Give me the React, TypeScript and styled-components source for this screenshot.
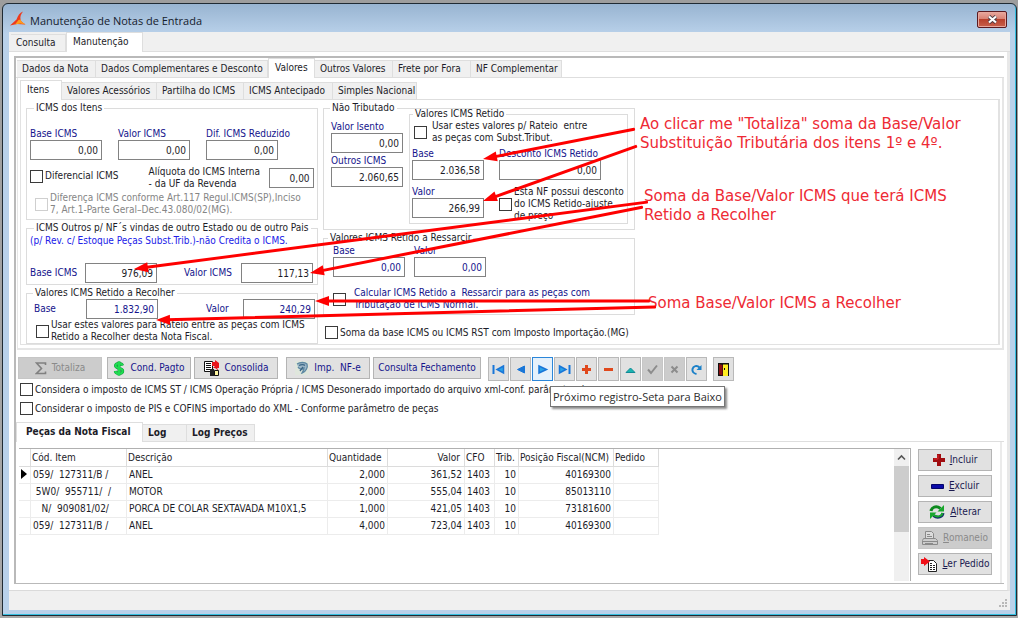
import React from 'react';
import styled, { createGlobalStyle, css } from 'styled-components';

const UI = '"DejaVu Sans Condensed", "DejaVu Sans", sans-serif';
const CAPTION = '"Open Sans", "Noto Sans", sans-serif';
const NAVY = '#14148c';
const INK = '#1c1c28';

const GlobalStyle = createGlobalStyle`
  *, *::before, *::after { box-sizing: border-box; }
  html, body { margin: 0; }
  body { background: #9d9d9d; font: 10px/12px ${UI}; color: ${INK}; }
  button, input { font: inherit; color: inherit; margin: 0; }
`;

/* ---------- window frame ---------- */

const Desktop = styled.div`
  min-height: 100vh;
  padding: 3px 1px 3px 2px;
  display: flex;
  flex-direction: column;
  background: linear-gradient(#9d9d9d, #a8a8a8);
`;

const Window = styled.section`
  flex: 1;
  display: flex;
  flex-direction: column;
  padding: 0 6px 5px;
  border: 1px solid #1f2a33;
  border-radius: 6px 6px 0 0;
  background: linear-gradient(#98b4d1 0, #b9d1ea 30px);
  box-shadow: inset -1px -1px 0 #35bfe0;
`;

const TitleBar = styled.header`
  height: 28px;
  display: flex;
  align-items: center;
  gap: 4px;
  padding: 2px 3px 0 1px;
  font: 11px/16px ${CAPTION};
  color: #15202c;
`;

const Title = styled.h1`
  flex: 1;
  margin: 0;
  padding-top: 4px;
  font: inherit;
`;

const CloseButton = styled.button`
  width: 30px;
  height: 17px;
  padding: 0;
  display: grid;
  place-items: center;
  border: 1px solid #5b1a20;
  border-radius: 2px;
  background: linear-gradient(#e9a99f 0, #d98274 45%, #b8402c 50%, #c8614c 100%);
  box-shadow: inset 0 0 0 1px #e7a79d;
`;

const Client = styled.div`
  flex: 1;
  display: flex;
  flex-direction: column;
  background: #fff;
`;

/* ---------- tabs and pages ---------- */

const TabBar = styled.div<{ $inset?: number; $fill?: string }>`
  height: 20px;
  display: flex;
  align-items: flex-end;
  padding-left: ${p => p.$inset ?? 0}px;
  background: ${p => p.$fill ?? '#fff'};
  border-bottom: 1px solid #dedede;
`;

const Tab = styled.button<{ $active?: boolean; $w: number; $bold?: boolean }>`
  width: ${p => p.$w}px;
  height: 17px;
  padding: 0 0 0 5px;
  border: 1px solid #dedede;
  border-left-width: 0;
  border-bottom: 0;
  background: #f0f0f0;
  text-align: left;
  white-space: nowrap;
  font-weight: ${p => (p.$bold ? 700 : 400)};
  ${p => p.$active && css`
    height: 20px;
    margin-bottom: -1px;
    padding: 0 0 2px ${p.$bold ? 9 : 6}px;
    border-left-width: 1px;
    background: #fff;
  `}
`;

const Outer = styled.div`
  flex: 1;
  display: flex;
  flex-direction: column;
  padding: 4px 3px 6px 5px;
  border-right: 3px solid #e8e8e8;
  border-bottom: 1px solid #dadada;
`;

const Sunken = styled.div`
  flex: 1;
  display: flex;
  flex-direction: column;
  border: solid #b9b9b9;
  border-width: 2px 0 1px 2px;
`;

const Page = styled.div`
  margin-left: 1px;
  padding: 2px 2px 3px;
  border: solid #e6e6e6;
  border-width: 0 2px 2px 1px;
`;

const ItemsPage = styled.div`
  position: relative;
  display: flex;
  gap: 5px;
  padding: 2px 4px 0 5px;
  border: solid #e2e2e2;
  border-width: 0 2px 1px 1px;
`;

/* ---------- form pieces ---------- */

const Column = styled.div<{ $w: number; $gap: number }>`
  width: ${p => p.$w}px;
  flex: none;
  display: flex;
  flex-direction: column;
  gap: ${p => p.$gap}px;
`;

const Group = styled.fieldset<{ $pad: string; $legend?: number; $raised?: boolean }>`
  min-width: 0;
  margin: ${p => (p.$raised ? -6 : 0)}px 0 0;
  padding: ${p => p.$pad};
  border: 1px solid #dcdcdc;
  > legend {
    margin-left: ${p => p.$legend ?? 4}px;
    padding: 0 2px;
    height: 12px;
    white-space: nowrap;
  }
`;

const Row = styled.div<{ $gap?: number; $top?: number; $left?: number }>`
  display: flex;
  align-items: flex-start;
  gap: ${p => p.$gap ?? 0}px;
  margin-top: ${p => p.$top ?? 0}px;
  padding-left: ${p => p.$left ?? 0}px;
`;

const StackedField = styled.label<{ $w?: number }>`
  display: flex;
  flex-direction: column;
  width: ${p => p.$w ?? 72}px;
  color: ${NAVY};
  line-height: 12px;
  white-space: nowrap;
`;

const InlineField = styled.label<{ $label: number; $plain?: boolean }>`
  display: grid;
  grid-template-columns: ${p => p.$label}px auto;
  align-items: center;
  color: ${p => (p.$plain ? INK : NAVY)};
`;

const NumberInput = styled.input<{ $w?: number; $navy?: boolean }>`
  width: ${p => p.$w ?? 72}px;
  height: 20px;
  padding: 0 3px;
  border: 1px solid #828282;
  border-radius: 0;
  background: #fff;
  color: ${p => (p.$navy ? NAVY : INK)};
  text-align: right;
`;

const Tick = styled.label<{ $h?: number; $gap?: number; $color?: string }>`
  display: flex;
  align-items: center;
  gap: ${p => p.$gap ?? 2}px;
  min-height: ${p => p.$h ?? 13}px;
  color: ${p => p.$color ?? INK};
  white-space: pre;
  input {
    appearance: none;
    flex: none;
    width: 13px;
    height: 13px;
    border: 1px solid #3a3a3a;
    background: #fff;
  }
  input:disabled { border-color: #cfcfcf; }
`;

const Hint = styled.p`
  margin: 0;
  color: #2020e8;
  white-space: nowrap;
`;

/* ---------- annotations ---------- */

const Notes = styled.div`
  display: flex;
  flex-direction: column;
  padding-top: 13px;
  color: #ee2a34;
  font: 15px/19px "DejaVu Sans", sans-serif;
`;

const Note = styled.p<{ $top?: number; $left?: number }>`
  margin: ${p => p.$top ?? 0}px 0 0 ${p => p.$left ?? 0}px;
  white-space: pre;
`;

const ArrowLayer = styled.svg`
  position: absolute;
  inset: 0;
  width: 100%;
  height: 100%;
  overflow: visible;
  pointer-events: none;
`;

/* ---------- toolbar ---------- */

const Toolbar = styled.div`
  display: flex;
  align-items: flex-start;
  margin: 7px 0 0 2px;
`;

const ButtonSet = styled.div<{ $gap: number; $left?: number }>`
  display: flex;
  gap: ${p => p.$gap}px;
  margin-left: ${p => p.$left ?? 0}px;
`;

const Button = styled.button<{ $w: number }>`
  width: ${p => p.$w}px;
  height: 22px;
  padding: 0;
  display: flex;
  align-items: center;
  justify-content: center;
  gap: 5px;
  border: 1px solid #b4b4b4;
  background: #e1e1e1;
  color: ${NAVY};
  white-space: pre;
  &:disabled {
    border-color: #c6c6c6;
    background: #cccccc;
    color: #8a8a8a;
  }
`;

const ActionButton = styled(Button)`
  color: #1a1a50;
`;

const NavButton = styled.button<{ $hot?: boolean }>`
  position: relative;
  width: 21px;
  height: 24px;
  padding: 0;
  display: grid;
  place-items: center;
  border: 1px solid ${p => (p.$hot ? '#2b86d9' : '#b9b9b9')};
  background: ${p => (p.$hot ? '#e5f1fb' : '#e1e1e1')};
  &:disabled { background: #cccccc; border-color: #c6c6c6; }
`;

const Tooltip = styled.span`
  position: absolute;
  z-index: 2;
  top: 28px;
  left: 17px;
  padding: 1px 2px;
  border: 1px solid #767676;
  background: #fff;
  box-shadow: 2px 2px 2px rgba(0, 0, 0, 0.45);
  font: 11px/17px ${CAPTION};
  color: #2c2c2c;
  white-space: nowrap;
`;

const Options = styled.div`
  display: flex;
  flex-direction: column;
  gap: 6px;
  padding: 2px 0 7px 4px;
`;

/* ---------- grid ---------- */

const Parts = styled.div`
  flex: 1;
  display: flex;
  gap: 7px;
  margin-right: 2px;
  padding: 6px 8px 2px 3px;
  border-right: 2px solid #ebebeb;
`;

const GridFrame = styled.div`
  flex: 1;
  min-height: 133px;
  display: flex;
  justify-content: space-between;
  border: solid #b0b0b0;
  border-width: 1px 1px 0 0;
`;

const Grid = styled.table`
  table-layout: fixed;
  width: 640px;
  height: 86px;
  border-collapse: separate;
  border-spacing: 0;
  th, td {
    height: 17px;
    padding: 0 2px;
    border: solid #ececec;
    border-width: 0 1px 1px 0;
    font-weight: 400;
    text-align: left;
    white-space: pre;
    line-height: 12px;
  }
  th { height: 18px; padding: 0 1px; border-color: #dcdcdc; }
`;

const Cell = styled.td<{ $right?: boolean }>`
  && { text-align: ${p => (p.$right ? 'right' : 'left')}; }
`;

const Head = styled.th<{ $right?: boolean }>`
  && { text-align: ${p => (p.$right ? 'right' : 'left')}; }
  && { padding-right: ${p => (p.$right ? 4 : 0)}px; }
`;

const ScrollTrack = styled.div`
  width: 15px;
  margin-right: 1px;
  display: flex;
  flex-direction: column;
  align-items: stretch;
  background: #f0f0f0;
  svg { height: 17px; width: 15px; }
`;

const Thumb = styled.div`
  height: 66px;
  background: #cdcdcd;
`;

const Actions = styled.div`
  display: flex;
  flex-direction: column;
  gap: 4px;
  padding-top: 1px;
`;

const StatusBar = styled.footer`
  height: 19px;
  display: flex;
  align-items: flex-end;
  justify-content: flex-end;
  padding: 2px;
  background: #f0f0f0;
`;

/* ---------- icons ---------- */

const AppIcon = () => (
  <svg width="16" height="16" viewBox="0 0 16 16">
    <path d="M13 0.500C9.500 2 8 4.500 6.500 8.500L0 14.500 7 13l8.500.5C13 12 11 10.500 10.500 8.500 10 5.500 11 3 13 .5z" fill="#ee3a1c" />
    <path d="M8.500 9l2-.5c.5 2 2.500 3.500 5 5L10.500 12.500 5 13.500z" fill="#ff9d1c" />
  </svg>
);

const Sigma = () => (
  <svg width="12" height="13" viewBox="0 0 12 13">
    <path d="M10.500 3V1H1.500l5 5.500-5 5h9V9.500" fill="none" stroke="#808080" strokeWidth="1.600" />
  </svg>
);

const DOLLAR = 'M9.500 4.500C9 2.800 7.500 2.500 6 2.500c-2 0-3.500.8-3.500 2.300C2.500 8 9.700 6.500 9.700 10c0 1.600-1.700 2.500-3.700 2.500-1.800 0-3.400-.6-3.700-2.500M6 .5v14';
const Dollar = () => (
  <svg width="12" height="15" viewBox="0 0 12 15" fill="none">
    <path d={DOLLAR} stroke="#10983a" strokeWidth="3" />
    <path d={DOLLAR} stroke="#1fdc50" strokeWidth="2" />
  </svg>
);

const Merge = () => (
  <svg width="16" height="16" viewBox="0 0 16 16">
    <path d="M.5 1.500h8v10h-8z" fill="#fff" stroke="#111" />
    <path d="M2 3.500h5M2 5.500h5M2 7.500h5M2 9.500h5" stroke="#111" />
    <path d="M8 2h3V0l4 3v5h-2l2 3-4-3H9l2-2H8z" fill="#e8141c" />
    <path d="M6 9h4l1 7H6z" fill="#222" />
    <path d="M10.500 10.500h4v5h-4z" fill="#fff6a0" stroke="#111" />
  </svg>
);

const Import = () => (
  <svg width="14" height="14" viewBox="0 0 14 14">
    <path d="M0 0h14v14H0z" fill="#dfe6dc" />
    <path d="M2 3c3-2 8-2 10 0 1 3-1 8-5 9 1-2 2-3 2-5-2 2-5 1-6-1" fill="#9db8c8" stroke="#5d88a2" strokeWidth="1.300" />
    <path d="M4 4.500c2-1 5-1 6 0M5 10l3-4" stroke="#3a6685" strokeWidth="1.300" fill="none" />
  </svg>
);

const BLUE = '#1976d8';
const navIcons: Record<string, React.ReactNode> = {
  first: (
    <>
      <path d="M1.500 2v9" stroke={BLUE} strokeWidth="2" />
      <path d="M11.500 3L5 6.500l6.500 3.500z" fill="#2aa3e8" stroke={BLUE} strokeWidth="1.500" />
    </>
  ),
  prev: <path d="M10.500 3L3.500 6.500l7 3.500z" fill={BLUE} stroke={BLUE} />,
  next: <path d="M3 3l7.500 3.500L3 10z" fill="#2aa3e8" stroke={BLUE} strokeWidth="1.500" />,
  last: (
    <>
      <path d="M11.500 2v9" stroke={BLUE} strokeWidth="2" />
      <path d="M1.500 3L8 6.500 1.500 10z" fill="#2aa3e8" stroke={BLUE} strokeWidth="1.500" />
    </>
  ),
  add: <path d="M6.500 2v9M2 6.500h9" stroke="#e0481c" strokeWidth="3" />,
  del: <path d="M2 6.500h9" stroke="#e0481c" strokeWidth="3" />,
  edit: <path d="M2 9.500l4.500-4.500 4.500 4.500z" fill="#1ab5b0" stroke="#118a96" />,
  post: <path d="M2 6.500l3 3.500 6-7.500" fill="none" stroke="#8c8c8c" strokeWidth="2" />,
  cancel: <path d="M3.500 3.500l6 6m0-6l-6 6" stroke="#8c8c8c" strokeWidth="2" />,
  refresh: (
    <>
      <path d="M6.500 11C3.500 10.500 2 8.500 2.500 6 3.200 3 7 1.800 9.500 4.500" fill="none" stroke="#1b80c8" strokeWidth="2" />
      <path d="M11.500 2v5h-5z" fill="#1b80c8" />
    </>
  ),
  exit: (
    <>
      <path d="M1 0h11v13H1z" fill="#111" />
      <path d="M6 1.500h5V13H6z" fill="#ffee22" />
      <path d="M2 1l3.500 1v10.500L2 11.500z" fill="#8c1010" />
      <path d="M7.500 5v2" stroke="#111" />
    </>
  ),
};

const NavIcon = ({ kind }: { kind: string }) => (
  <svg width="13" height="13" viewBox="0 0 13 13">{navIcons[kind]}</svg>
);

const PlusIcon = () => (
  <svg width="12" height="12" viewBox="0 0 12 12">
    <path d="M4 0h4v4h4v4H8v4H4V8H0V4h4z" fill="#a00c10" />
    <path d="M5 1v4H1" fill="none" stroke="#d8262c" />
  </svg>
);

const MinusIcon = () => (
  <svg width="13" height="12" viewBox="0 0 13 12">
    <path d="M.5 4.500h12v4H.5z" fill="#0a0aa8" stroke="#05056a" />
  </svg>
);

const SwapIcon = () => (
  <svg width="16" height="16" viewBox="0 0 16 16">
    <path d="M2 7C2.500 3.500 7 1 11.500 4.500" fill="none" stroke="#0d8a1e" strokeWidth="3" />
    <path d="M15 1v6.500H8.500z" fill="#18a82c" />
    <path d="M14 9c-.5 3.500-5 6-9.500 2.500" fill="none" stroke="#14306a" strokeWidth="3" />
    <path d="M13.500 9c-.5 3-5 5-9 2" fill="none" stroke="#18a82c" strokeWidth="1.800" />
    <path d="M1 15V8.500h6.500z" fill="#18a82c" />
  </svg>
);

const PrinterIcon = () => (
  <svg width="16" height="15" viewBox="0 0 16 15" fill="none" stroke="#8a8a8a">
    <path d="M3.500 7.500v-7h6l2 2v5" fill="#dcdcdc" />
    <path d="M5 3.500h3M5 5.500h5" />
    <path d="M1.500 7.500h12l2 2v4H.5v-4zM.5 10.500h15M3 12.500h8" />
  </svg>
);

const ReadIcon = () => (
  <svg width="17" height="15" viewBox="0 0 17 15">
    <path d="M7.500 3.500h5l3 3v8h-8z" fill="#fff" stroke="#222" />
    <path d="M9 8.500h5M9 10.500h5M9 12.500h5M9 6.500h3" stroke="#222" strokeDasharray="2 1" />
    <path d="M0 2h3V0l6 4.500L3 9V7H0z" fill="#f01018" />
  </svg>
);

/* ---------- data ---------- */

const rows = [
  ['059/  127311/B /', 'ANEL', '2,000', '361,52', '1403', '10', '40169300', ''],
  [' 5W0/  955711/  /', 'MOTOR', '2,000', '555,04', '1403', '10', '85013110', ''],
  ['   N/  909081/02/', 'PORCA DE COLAR SEXTAVADA M10X1,5', '1,000', '421,05', '1403', '10', '73181600', ''],
  ['059/  127311/B /', 'ANEL', '4,000', '723,04', '1403', '10', '40169300', ''],
];
const rightCols = [false, false, true, true, false, true, true, false];
const headings = ['Cód. Item', 'Descrição', 'Quantidade', 'Valor', 'CFO', 'Trib.', 'Posição Fiscal(NCM)', 'Pedido'];
const colWidths = [12, 96, 201, 60, 77, 30, 24, 95, 45];

type Span = [number, number, number, number];

const arrows: Span[] = [
  [614, 29, 462, 59],
  [616, 46, 462, 101],
  [627, 102, 113, 169],
  [622, 107, 289, 173],
  [629, 201, 294, 201],
  [635, 207, 135, 220],
];

const Arrow = ({ at: [x1, y1, x2, y2] }: { at: Span }) => {
  const length = Math.hypot(x2 - x1, y2 - y1);
  const angle = (Math.atan2(y2 - y1, x2 - x1) * 180) / Math.PI;
  return (
    <g transform={`translate(${x1} ${y1}) rotate(${angle})`} fill="#fe0000">
      <rect x={0} y={-1.5} width={length - 10} height={3} rx={1} />
      <path d={`M${length} 0L${length - 14} -5v10z`} />
    </g>
  );
};

interface CheckProps {
  children: React.ReactNode;
  disabled?: boolean;
  h?: number;
  gap?: number;
  color?: string;
}

const Check = ({ children, disabled, h, gap, color }: CheckProps) => (
  <Tick $h={h} $gap={gap} $color={color}>
    <input type="checkbox" disabled={disabled} />
    <span>{children}</span>
  </Tick>
);

interface StackedProps {
  label: string;
  value: string;
  navy?: boolean;
  w?: number;
}

const Stacked = ({ label, value, navy, w }: StackedProps) => (
  <StackedField $w={w}>
    {label}
    <NumberInput defaultValue={value} $navy={navy} $w={w} />
  </StackedField>
);

export default function App() {
  return (
    <Desktop>
      <GlobalStyle />
      <Window>
        <TitleBar>
          <AppIcon />
          <Title>Manutenção de Notas de Entrada</Title>
          <CloseButton aria-label="Fechar">
            <svg width="11" height="9" viewBox="0 0 11 9">
              <path d="M2 1.500l7 6m0-6l-7 6" stroke="#4b3a42" strokeWidth="3.800" />
              <path d="M2 1.500l7 6m0-6l-7 6" stroke="#fff" strokeWidth="2.200" />
            </svg>
          </CloseButton>
        </TitleBar>
        <Client>
          <TabBar $inset={2} $fill="#f0f0f0" role="tablist">
            <Tab $w={55} role="tab">Consulta</Tab>
            <Tab $w={77} $active role="tab">Manutenção</Tab>
          </TabBar>
          <Outer>
            <Sunken>
              <TabBar $inset={1} role="tablist">
                <Tab $w={79} role="tab">Dados da Nota</Tab>
                <Tab $w={172} role="tab">Dados Complementares e Desconto</Tab>
                <Tab $w={47} $active role="tab">Valores</Tab>
                <Tab $w={78} role="tab">Outros Valores</Tab>
                <Tab $w={78} role="tab">Frete por Fora</Tab>
                <Tab $w={91} role="tab">NF Complementar</Tab>
              </TabBar>
              <Page>
                <TabBar role="tablist">
                  <Tab $w={42} $active role="tab">Itens</Tab>
                  <Tab $w={95} role="tab">Valores Acessórios</Tab>
                  <Tab $w={87} role="tab">Partilha do ICMS</Tab>
                  <Tab $w={89} role="tab">ICMS Antecipado</Tab>
                  <Tab $w={84} role="tab">Simples Nacional</Tab>
                </TabBar>
                <ItemsPage>
                  <Column $w={292} $gap={2}>
                    <Group $pad="14px 4px 3px 3px">
                      <legend>ICMS dos Itens</legend>
                      <Row $gap={16}>
                        <Stacked label="Base ICMS" value="0,00" />
                        <Stacked label="Valor ICMS" value="0,00" />
                        <Stacked label="Dif. ICMS Reduzido" value="0,00" />
                      </Row>
                      <Row $top={6} $gap={30}>
                        <Check h={20}>Diferencial ICMS</Check>
                        <InlineField $label={120} $plain>
                          <span>Alíquota do ICMS Interna<br />- da UF da Revenda</span>
                          <NumberInput $w={45} defaultValue="0,00" />
                        </InlineField>
                      </Row>
                      <Row $top={2} $left={5}>
                        <Check disabled color="#858585">
                          {'Diferença ICMS conforme Art.117 Regul.ICMS(SP),Inciso\n7, Art.1-Parte Geral–Dec.43.080/02(MG).'}
                        </Check>
                      </Row>
                    </Group>
                    <Group $pad="1px 5px 1px 3px">
                      <legend>ICMS Outros p/ NF´s vindas de outro Estado ou de outro Pais</legend>
                      <Hint>(p/ Rev. c/ Estoque Peças Subst.Trib.)-não Credita o ICMS.</Hint>
                      <Row $gap={27} $top={16}>
                        <InlineField $label={55}>
                          Base ICMS
                          <NumberInput defaultValue="976,09" />
                        </InlineField>
                        <InlineField $label={57}>
                          Valor ICMS
                          <NumberInput defaultValue="117,13" />
                        </InlineField>
                      </Row>
                    </Group>
                    <Group $pad="0 4px 0 7px" $legend={-1}>
                      <legend>Valores ICMS Retido a Recolher</legend>
                      <Row $gap={48}>
                        <InlineField $label={52}>
                          Base
                          <NumberInput $navy defaultValue="1.832,90" />
                        </InlineField>
                        <InlineField $label={37}>
                          Valor
                          <NumberInput $navy defaultValue="240,29" />
                        </InlineField>
                      </Row>
                      <Row $left={2}>
                        <Check>
                          {'Usar estes valores para Rateio entre as peças com ICMS\nRetido a Recolher desta Nota Fiscal.'}
                        </Check>
                      </Row>
                    </Group>
                  </Column>
                  <Column $w={312} $gap={2}>
                    <Group $pad="0 3px 5px 7px" $legend={-1}>
                      <legend>Não Tributado</legend>
                      <Row $gap={6}>
                        <Column $w={72} $gap={2}>
                          <Row $top={7}><Stacked label="Valor Isento" value="0,00" /></Row>
                          <Stacked label="Outros ICMS" value="2.060,65" />
                        </Column>
                        <Group $pad="0 3px 1px 2px" $legend={1} $raised>
                          <legend>Valores ICMS Retido</legend>
                          <Row $left={2}>
                            <Check gap={5}>{'Usar estes valores p/ Rateio  entre\nas peças com Subst.Tribut.'}</Check>
                          </Row>
                          <Row $gap={15} $top={4}>
                            <Stacked label="Base" value="2.036,58" />
                            <Stacked label="Desconto ICMS Retido" value="0,00" w={102} />
                          </Row>
                          <Row $gap={15} $top={6}>
                            <Stacked label="Valor" value="266,99" />
                            <Check>{'Esta NF possui desconto\ndo ICMS Retido-ajuste\nde preço'}</Check>
                          </Row>
                        </Group>
                      </Row>
                    </Group>
                    <Group $pad="1px 8px 3px 9px" $legend={-5}>
                      <legend>Valores ICMS Retido a Ressarcir</legend>
                      <Row $gap={9}>
                        <Stacked label="Base" value="0,00" navy />
                        <Stacked label="Valor" value="0,00" navy />
                      </Row>
                      <Row $top={10}>
                        <Check gap={8} color={NAVY}>
                          {'Calcular ICMS Retido a  Ressarcir para as peças com\nTributação de ICMS Normal.'}
                        </Check>
                      </Row>
                    </Group>
                    <Row $top={9} $left={2}>
                      <Check>Soma da base ICMS ou ICMS RST com Imposto Importação.(MG)</Check>
                    </Row>
                  </Column>
                  <Notes>
                    <Note>{'Ao clicar me "Totaliza" soma da Base/Valor\nSubstituição Tributária dos itens 1º e 4º.'}</Note>
                    <Note $top={34} $left={4}>{'Soma da Base/Valor ICMS que terá ICMS\nRetido a Recolher'}</Note>
                    <Note $top={69} $left={8}>Soma Base/Valor ICMS a Recolher</Note>
                  </Notes>
                  <ArrowLayer>
                    {arrows.map((a, i) => <Arrow key={i} at={a} />)}
                  </ArrowLayer>
                </ItemsPage>
              </Page>
              <Toolbar>
                <Button $w={84} disabled><Sigma />Totaliza</Button>
                <ButtonSet $gap={3} $left={5}>
                  <Button $w={84}><Dollar />Cond. Pagto</Button>
                  <Button $w={84}><Merge />Consolida</Button>
                </ButtonSet>
                <ButtonSet $gap={3} $left={8}>
                  <Button $w={84}><Import />{'Imp.  NF-e'}</Button>
                  <Button $w={108}>Consulta Fechamento</Button>
                </ButtonSet>
                <ButtonSet $gap={1} $left={7}>
                  {['first', 'prev', 'next', 'last', 'add', 'del', 'edit', 'post', 'cancel', 'refresh'].map(kind => (
                    <NavButton
                      key={kind}
                      aria-label={kind}
                      $hot={kind === 'next'}
                      disabled={kind === 'post' || kind === 'cancel'}
                    >
                      <NavIcon kind={kind} />
                      {kind === 'next' && <Tooltip role="tooltip">Próximo registro-Seta para Baixo</Tooltip>}
                    </NavButton>
                  ))}
                </ButtonSet>
                <ButtonSet $gap={0} $left={6}>
                  <NavButton aria-label="exit"><NavIcon kind="exit" /></NavButton>
                </ButtonSet>
              </Toolbar>
              <Options>
                <Check>Considera o imposto de ICMS ST / ICMS Operação Própria / ICMS Desonerado importado do arquivo xml-conf. parâmetro de peças</Check>
                <Check>Considerar o imposto de PIS e COFINS importado do XML - Conforme parâmetro de peças</Check>
              </Options>
              <TabBar role="tablist">
                <Tab $w={127} $active $bold role="tab">Peças da Nota Fiscal</Tab>
                <Tab $w={44} $bold role="tab">Log</Tab>
                <Tab $w={68} $bold role="tab">Log Preços</Tab>
              </TabBar>
              <Parts>
                <GridFrame>
                  <Grid>
                    <colgroup>{colWidths.map((w, i) => <col key={i} width={w} />)}</colgroup>
                    <thead>
                      <tr>
                        <Head />
                        {headings.map((h, i) => <Head key={h} $right={i === 3}>{h}</Head>)}
                      </tr>
                    </thead>
                    <tbody>
                      {rows.map((r, i) => (
                        <tr key={i}>
                          <Cell>
                            {i === 0 && <svg width="6" height="10" viewBox="0 0 6 10"><path d="M0 0l6 5-6 5z" fill="#000" /></svg>}
                          </Cell>
                          {r.map((c, j) => <Cell key={j} $right={rightCols[j]}>{c}</Cell>)}
                        </tr>
                      ))}
                    </tbody>
                  </Grid>
                  <ScrollTrack>
                    <svg viewBox="0 0 15 17"><path d="M4 10.500l3.500-3.500 3.500 3.500" fill="none" stroke="#555" strokeWidth="1.600" /></svg>
                    <Thumb />
                  </ScrollTrack>
                </GridFrame>
                <Actions>
                  <ActionButton $w={74}><PlusIcon /><span><u>I</u>ncluir</span></ActionButton>
                  <ActionButton $w={74}><MinusIcon /><span><u>E</u>xcluir</span></ActionButton>
                  <ActionButton $w={74}><SwapIcon /><span><u>A</u>lterar</span></ActionButton>
                  <ActionButton $w={74} disabled><PrinterIcon /><span><u>R</u>omaneio</span></ActionButton>
                  <ActionButton $w={74}><ReadIcon /><span><u>L</u>er Pedido</span></ActionButton>
                </Actions>
              </Parts>
            </Sunken>
          </Outer>
          <StatusBar>
            <svg width="9" height="9" viewBox="0 0 9 9" fill="#b8b8b8">
              <path d="M6 0h2v2H6zM3 3h2v2H3zM6 3h2v2H6zM0 6h2v2H0zM3 6h2v2H3zM6 6h2v2H6z" />
            </svg>
          </StatusBar>
        </Client>
      </Window>
    </Desktop>
  );
}
